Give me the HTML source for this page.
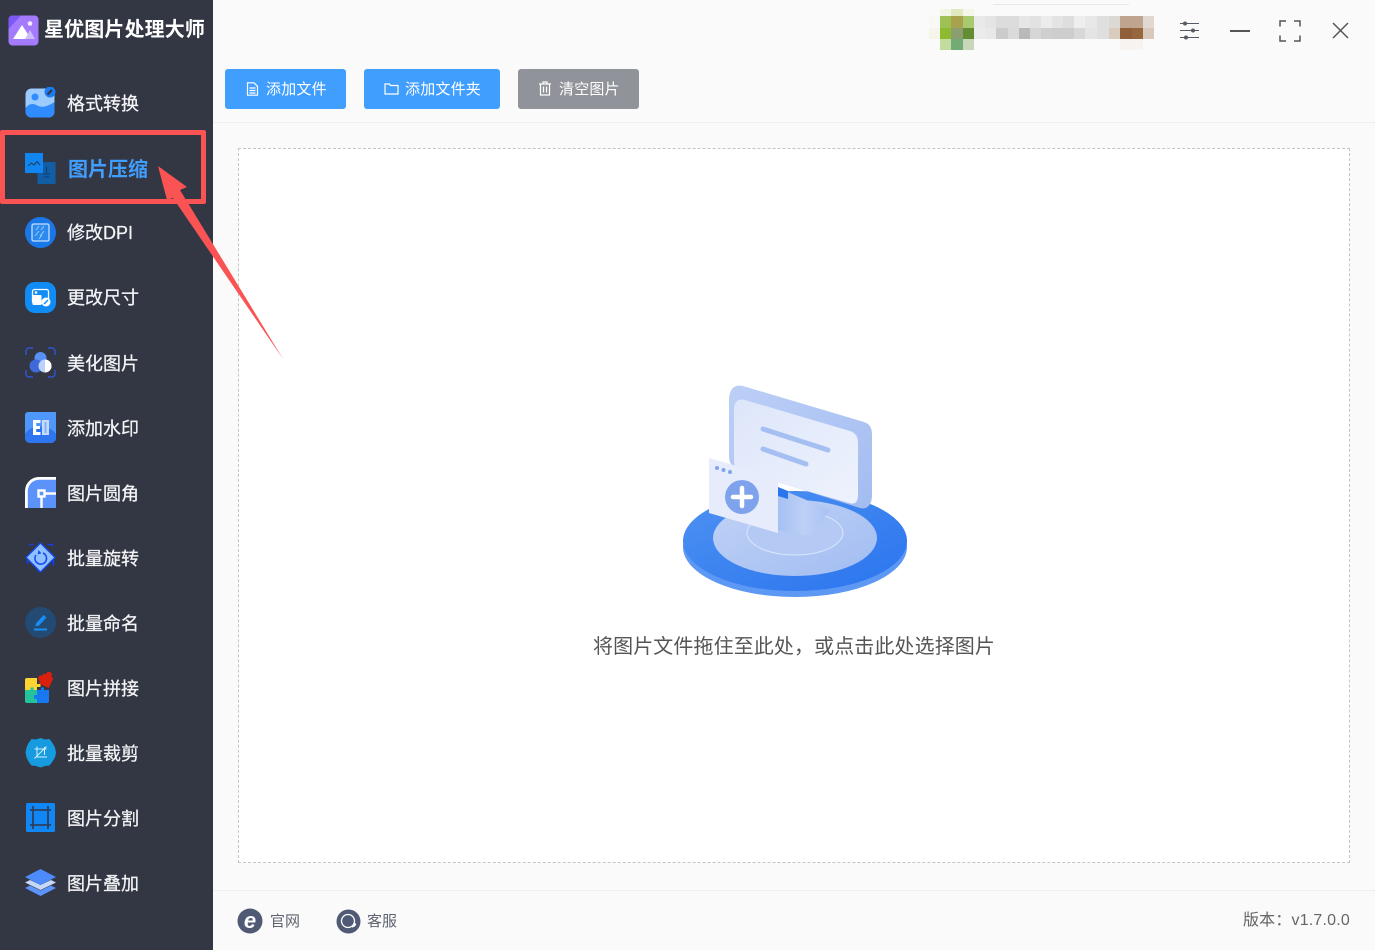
<!DOCTYPE html>
<html lang="zh-CN"><head><meta charset="utf-8"><title>星优图片处理大师</title>
<style>
*{box-sizing:border-box;margin:0;padding:0}
html,body{width:1375px;height:950px;overflow:hidden;background:#fafafa;font-family:"Liberation Sans","Noto Sans CJK SC",sans-serif}
.abs{position:absolute}
#side{position:absolute;left:0;top:0;width:213px;height:950px;background:#333643}
.title{position:absolute;left:44px;top:16px;font-size:20px;line-height:28px;font-weight:700;color:#fff;white-space:nowrap;letter-spacing:.12px}
.it{position:absolute;left:67px;font-size:18px;line-height:26px;color:#f4f5f7;white-space:nowrap;-webkit-text-stroke:.25px #f4f5f7}
.ic{position:absolute;left:25px;width:31px;height:31px}
.btn{position:absolute;top:69px;height:40px;border-radius:3px;background:#409eff;color:#fff;font-size:15px;line-height:40px;white-space:nowrap;letter-spacing:.2px}
.btn span{position:absolute;top:1px}
.btn svg{position:absolute;top:12px}
.line{position:absolute;left:213px;width:1162px;height:1px;background:#efefef}
#drop{position:absolute;left:238px;top:148px;width:1112px;height:715px;background:#fff;border:1px dashed #c4c4c4}
.m{position:absolute}
</style></head><body>
<div id="side"></div>

<svg class="abs" style="left:8px;top:15px" width="31" height="31" viewBox="0 0 31 31"><rect width="30" height="30" x=".5" y=".5" rx="4" fill="#a47bfd"/><path d="M.5 14V4.500a4 4 0 0 1 4-4H13z" fill="#7d58f2"/><circle cx="22" cy="8.500" r="2.300" fill="#f3ecff"/><path d="M5 24 14 10l9 14z" fill="#fff"/><path d="M17 24l5-9 5 9z" fill="#cdbdfb"/></svg>
<div class="title">星优图片处理大师</div>

<svg class="ic" style="top:87px" viewBox="0 0 31 31"><rect x=".500" y="1.500" width="29" height="29" rx="6" fill="#9bcbff"/><path d="M.500 21c5-6 9-4 13-2s10 0 16-4v9.500a6 6 0 0 1-6 6h-17a6 6 0 0 1-6-6z" fill="#2f8cff"/><circle cx="10" cy="10" r="3.500" fill="#2f8cff"/><circle cx="25" cy="5" r="5.500" fill="#1a7cf2"/><path d="M22.500 7.500 27 3" stroke="#333643" stroke-width="2.200"/></svg>
<div class="it" style="top:91px">格式转换</div>

<svg class="ic" style="top:153px" viewBox="0 0 31 31"><rect x="12.500" y="9" width="18" height="22" fill="#125ea5"/><path d="M21.500 14v6M18 21h7M18.500 24h6" stroke="#0a3d73" stroke-width="1"/><rect width="18" height="20" y="0" fill="#1186f1"/><path d="M3 13l3.500-3 2.500 2 3-3.500 3 3.500" fill="none" stroke="#1c3d63" stroke-width="1"/></svg>
<div class="it" style="top:157px;left:68px;color:#409eff;font-weight:700;font-size:20px;-webkit-text-stroke:0">图片压缩</div>

<svg class="ic" style="top:217px" viewBox="0 0 31 31"><circle cx="15.500" cy="15.500" r="15.500" fill="#1a77e8"/><rect x="7" y="7" width="17" height="17" rx="1.500" fill="#2c89f0" stroke="#c5defa" stroke-width="1.300"/><path d="M11 13l3-4M16 13l3-4M10 19l4-5M15 19l4-5M14 22l3-4" stroke="#9fcbf8" stroke-width="1"/></svg>
<div class="it" style="top:220px">修改DPI</div>

<svg class="ic" style="top:282px" viewBox="0 0 31 31"><rect width="31" height="31" rx="10" fill="#118cf5"/><rect x="7.500" y="7.500" width="16" height="14" rx="2" fill="none" stroke="#fff" stroke-width="1.300"/><circle cx="11" cy="10.500" r="1.300" fill="#fff"/><rect x="7.500" y="13" width="9" height="10" rx="1" fill="#fff"/><circle cx="21" cy="20" r="4.500" fill="#fff"/><path d="M19 22l4-4" stroke="#118cf5" stroke-width="1.500"/></svg>
<div class="it" style="top:285px">更改尺寸</div>

<svg class="ic" style="top:347px" viewBox="0 0 31 31"><path d="M1 8V4a3 3 0 0 1 3-3h4M23 1h4a3 3 0 0 1 3 3v4M30 23v4a3 3 0 0 1-3 3h-4M8 30H4a3 3 0 0 1-3-3v-4" fill="none" stroke="#2c55cf" stroke-width="1.500"/><circle cx="15.500" cy="11" r="6" fill="#5990f5"/><circle cx="11" cy="19" r="6.500" fill="#3f68d9"/><circle cx="20" cy="19" r="6.500" fill="#bcd2fb"/><path d="M20 12.500a6.500 6.500 0 0 1 0 13z" fill="#fff"/></svg>
<div class="it" style="top:351px">美化图片</div>

<svg class="ic" style="top:412px" viewBox="0 0 31 31"><path d="M3 0h28v26a5 5 0 0 1-5 5H5a5 5 0 0 1-5-5V3a3 3 0 0 1 3-3z" fill="#4f97fb"/><path d="M0 22c6-10 24-10 31 0v4a5 5 0 0 1-5 5H5a5 5 0 0 1-5-5z" fill="#2e76f0"/><path d="M8 8h7.500v3h-4.300v3H15v3h-3.800v3h4.300v3H8z" fill="#fff"/><path d="M17 8h7v15h-7z" fill="#c7dcfd"/><path d="M19.500 10v11h2V10z" fill="#7fb0f8"/></svg>
<div class="it" style="top:416px">添加水印</div>

<svg class="ic" style="top:477px" viewBox="0 0 31 31"><path d="M1 31V14A13 13 0 0 1 14 1h17v30z" fill="#5b93fb"/><path d="M1.400 31V14A12.600 12.600 0 0 1 14 1.400h17" fill="none" stroke="#fff" stroke-width="2.800"/><rect x="13.500" y="13.500" width="6" height="6" fill="none" stroke="#fff" stroke-width="2.400"/><path d="M20 16.500h11M16.500 20v11" stroke="#fff" stroke-width="2.400"/></svg>
<div class="it" style="top:481px">图片圆角</div>

<svg class="ic" style="top:542px" viewBox="0 0 31 31"><rect x="2.500" y="2.500" width="26" height="26" rx="3" fill="none" stroke="#1340ea" stroke-width="1.500" stroke-dasharray="6 14" stroke-dashoffset="3"/><path d="M15.500 1 30 15.500 15.500 30 1 15.500z" fill="#8fc0ff" stroke="#1449ed" stroke-width="1.300" stroke-linejoin="round"/><path d="M11 13a5.800 5.800 0 1 0 7-2" fill="none" stroke="#1449ed" stroke-width="1.500"/><path d="M13.500 8l2.800 3.200-3.700 1.300z" fill="#1449ed"/></svg>
<div class="it" style="top:546px">批量旋转</div>

<svg class="ic" style="top:607px" viewBox="0 0 31 31"><circle cx="15.500" cy="15.500" r="15.500" fill="#224a73"/><path d="M11 16.500 18.500 8l3 2.500-7.500 8-3.500 1z" fill="#1a8df5"/><rect x="9" y="21.500" width="13" height="2" fill="#1a8df5"/></svg>
<div class="it" style="top:611px">批量命名</div>

<svg class="ic" style="top:672px" viewBox="0 0 31 31"><path d="M0 8a2 2 0 0 1 2-2h10v6h3.500v3H12v3H0z" fill="#fcd535"/><path d="M0 18h5.500v-2.500h3V18H12v13H2a2 2 0 0 1-2-2z" fill="#24c39b"/><path d="M12 18h4v-2.500h3V18h5v11a2 2 0 0 1-2 2H12v-4h-3v-4h3z" fill="#1679f2"/><g transform="rotate(25 22 8)" fill="#d8200c"><rect x="16" y="3.500" width="11" height="11"/><circle cx="21.500" cy="2.500" r="3"/><circle cx="16" cy="9" r="3"/></g></svg>
<div class="it" style="top:676px">图片拼接</div>

<svg class="ic" style="top:737px" viewBox="0 0 31 31"><path d="M15.500 1l4.500 1.500 4.500-.5 3 4 2.500 4.500 1 5-1 5-2.500 4-3 4-4.500.5-4.500 1.500-4.500-1.500-4.500-.5-3-4-2-4-1-5 1-5 2-4.500 3-4 4.500.5z" fill="#169be0"/><path d="M9.500 12h12M12 9.500V20h10M19.500 10v8M9.500 21.500l12-12" stroke="#d4effb" stroke-width="1" fill="none"/></svg>
<div class="it" style="top:741px">批量裁剪</div>

<svg class="ic" style="top:802px" viewBox="0 0 31 31"><rect x="1" y="1" width="29" height="29" rx="1.500" fill="#1186f5"/><path d="M5 8h21M5 23h21M8 4v23M23 4v23" stroke="#2c3f5f" stroke-width="1.800"/></svg>
<div class="it" style="top:806px">图片分割</div>

<svg class="ic" style="top:867px" viewBox="0 0 31 31"><path d="M0 21l5-2.500 10.500 5 10.500-5 5 2.500-15.500 8z" fill="#5c94fb"/><path d="M0 15.500 5 13l10.500 5L26 13l5 2.500L15.500 23z" fill="#c7d9fb"/><path d="M15.500 2 31 10 15.500 18 0 10z" fill="#4d8bfb"/></svg>
<div class="it" style="top:871px">图片叠加</div>

<div class="line" style="top:122px"></div>
<div class="line" style="top:890px"></div>

<div class="btn" style="left:225px;width:121px"><svg style="left:21px;top:13px" width="13" height="14" viewBox="0 0 13 14" fill="none" stroke="#fff" stroke-width="1.200"><path d="M1.500.800h6.500l3.500 3.500v8.900h-10zM3.500 6h6M3.500 8.500h6M3.500 11h6"/></svg><span style="left:41px">添加文件</span></div>
<div class="btn" style="left:364px;width:136px"><svg style="left:20px;top:14px" width="15" height="12" viewBox="0 0 15 12" fill="none" stroke="#fff" stroke-width="1.200"><path d="M1 1h4.500l1 1.500H14v8.500H1z"/></svg><span style="left:41px">添加文件夹</span></div>
<div class="btn" style="left:518px;width:121px;background:#909399"><svg style="left:20px;top:12px" width="14" height="15" viewBox="0 0 14 15" fill="none" stroke="#fff" stroke-width="1.200"><path d="M1 3h12M5 3V1h4v2M2.500 3v11h9V3M5.500 5.500v6M8.500 5.500v6"/></svg><span style="left:41px">清空图片</span></div>

<div id="drop"></div>

<svg class="abs" style="left:660px;top:370px" width="270" height="240" viewBox="0 0 270 240">
<defs>
<linearGradient id="b1" x1="0" y1="0" x2="1" y2="1"><stop offset="0" stop-color="#4e92f2"/><stop offset="1" stop-color="#2a74ee"/></linearGradient>
<linearGradient id="b2" x1="0" y1="0" x2="1" y2="1"><stop offset="0" stop-color="#c0d2f6"/><stop offset="1" stop-color="#a2bdf2"/></linearGradient>
<linearGradient id="sc" x1="0" y1="0" x2="1" y2="1"><stop offset="0" stop-color="#dde6fa"/><stop offset="1" stop-color="#eef2fc"/></linearGradient>
<linearGradient id="nk" x1="0" y1="0" x2="1" y2="0"><stop offset="0" stop-color="#a6c0f3"/><stop offset=".5" stop-color="#bdd0f6"/><stop offset="1" stop-color="#a8c2f4"/></linearGradient>
<linearGradient id="fr" x1="0" y1="0" x2="1" y2="1"><stop offset="0" stop-color="#bccff6"/><stop offset="1" stop-color="#a3bcf1"/></linearGradient>
</defs>
<ellipse cx="135" cy="177" rx="112" ry="50" fill="#5c98f4"/>
<ellipse cx="135" cy="171" rx="112" ry="50" fill="url(#b1)"/>
<ellipse cx="135" cy="168" rx="82" ry="38" fill="url(#b2)"/>
<ellipse cx="135" cy="163" rx="48" ry="22" fill="#b4caf5" stroke="#dbe6fb" stroke-width="1"/>
<path d="M118 118 170 140 150 166 118 160z" fill="url(#nk)"/>
<path d="M69 31c0-12 5-17 14-15l121 36c6 2 8 6 8 13v60c0 10-5 15-12 13L80 100c-7-2-11-6-11-14z" fill="url(#fr)"/>
<path d="M74 39c0-7 4-11 11-9l105 31c6 2 8 6 8 12v52c0 7-3 10-9 8L84 103c-7-2-10-6-10-12z" fill="url(#sc)"/>
<path d="M103 59l65 21" stroke="#a5bff2" stroke-width="5" stroke-linecap="round"/>
<path d="M103 79l43 15" stroke="#a5bff2" stroke-width="5" stroke-linecap="round"/>
<path d="M118 117l10 4v8l-10-3z" fill="#2a74ee"/>
<path d="M49 88l69 20v55l-69-20z" fill="#e6ecfb"/>
<circle cx="57" cy="98" r="2" fill="#7fa4ee"/><circle cx="63.500" cy="100" r="2" fill="#7fa4ee"/><circle cx="70" cy="102" r="2" fill="#7fa4ee"/>
<circle cx="82" cy="127" r="17" fill="#7ea3ec"/>
<path d="M82 118v18M73 127h18" stroke="#fff" stroke-width="4.500" stroke-linecap="round"/>
</svg>

<div class="abs" style="left:593px;top:634px;font-size:20px;line-height:26px;color:#555;white-space:nowrap;letter-spacing:.1px">将图片文件拖住至此处，或点击此处选择图片</div>

<svg class="abs" style="left:237px;top:908px" width="26" height="26" viewBox="0 0 26 26"><circle cx="13" cy="13" r="12.500" fill="#505a74"/><text x="13" y="20" text-anchor="middle" font-family="Liberation Sans" font-size="22" font-weight="700" font-style="italic" fill="#fff">e</text></svg>
<div class="abs" style="left:270px;top:911px;font-size:15px;line-height:21px;color:#5f6470">官网</div>
<svg class="abs" style="left:336px;top:909px" width="25" height="25" viewBox="0 0 25 25"><circle cx="12.500" cy="12.500" r="12" fill="#505a74"/><circle cx="12" cy="12" r="6.500" fill="none" stroke="#fff" stroke-width="1.300"/><path d="M16 18l3-1.500" stroke="#fff" stroke-width="1.500"/><circle cx="19" cy="15.500" r="1.200" fill="#fff"/></svg>
<div class="abs" style="left:367px;top:911px;font-size:15px;line-height:21px;color:#5f6470">客服</div>
<div class="abs" style="left:1243px;top:910px;font-size:16px;line-height:21px;color:#666;white-space:nowrap;letter-spacing:.18px">版本：v1.7.0.0</div>

<!-- mosaic -->
<div class="abs" style="left:993px;top:4px;width:136px;height:1px;background:#e8e8e8"></div>
<div id="mos">
<div class="m" style="left:929px;top:16px;width:11px;height:12px;background:#f8f9f4"></div>
<div class="m" style="left:929px;top:28px;width:11px;height:11px;background:#f4f6ec"></div>
<div class="m" style="left:940px;top:9px;width:11px;height:7px;background:#f1f5e4"></div>
<div class="m" style="left:951px;top:9px;width:12px;height:7px;background:#dfe9c0"></div>
<div class="m" style="left:963px;top:9px;width:11px;height:7px;background:#f3f6e9"></div>
<div class="m" style="left:940px;top:16px;width:11px;height:12px;background:#9dc154"></div>
<div class="m" style="left:951px;top:16px;width:12px;height:12px;background:#a7a24b"></div>
<div class="m" style="left:963px;top:16px;width:11px;height:12px;background:#a9c96f"></div>
<div class="m" style="left:940px;top:28px;width:11px;height:11px;background:#8dba2f"></div>
<div class="m" style="left:951px;top:28px;width:12px;height:11px;background:#8c9d6f"></div>
<div class="m" style="left:963px;top:28px;width:11px;height:11px;background:#648c33"></div>
<div class="m" style="left:940px;top:39px;width:11px;height:11px;background:#c1dc9d"></div>
<div class="m" style="left:951px;top:39px;width:12px;height:11px;background:#72ab74"></div>
<div class="m" style="left:963px;top:39px;width:11px;height:11px;background:#c8d7b9"></div>
<div class="m" style="left:974px;top:16px;width:11px;height:12px;background:#e9e9e9"></div>
<div class="m" style="left:985px;top:16px;width:11px;height:12px;background:#e4e4e4"></div>
<div class="m" style="left:996px;top:16px;width:23px;height:12px;background:#dcdcdc"></div>
<div class="m" style="left:1019px;top:16px;width:11px;height:12px;background:#e6e6e6"></div>
<div class="m" style="left:1030px;top:16px;width:11px;height:12px;background:#e2e2e2"></div>
<div class="m" style="left:1041px;top:16px;width:11px;height:12px;background:#ececec"></div>
<div class="m" style="left:1052px;top:16px;width:11px;height:12px;background:#e4e4e4"></div>
<div class="m" style="left:1063px;top:16px;width:11px;height:12px;background:#dedede"></div>
<div class="m" style="left:1074px;top:16px;width:11px;height:12px;background:#eeeeee"></div>
<div class="m" style="left:1085px;top:16px;width:12px;height:12px;background:#e8e8e8"></div>
<div class="m" style="left:1097px;top:16px;width:12px;height:12px;background:#dfdfdf"></div>
<div class="m" style="left:1109px;top:16px;width:11px;height:12px;background:#dcd8d4"></div>
<div class="m" style="left:1120px;top:16px;width:23px;height:12px;background:#bfa590"></div>
<div class="m" style="left:1143px;top:16px;width:11px;height:12px;background:#e1d8d1"></div>
<div class="m" style="left:974px;top:28px;width:11px;height:11px;background:#ebebeb"></div>
<div class="m" style="left:985px;top:28px;width:11px;height:11px;background:#e8e8e8"></div>
<div class="m" style="left:996px;top:28px;width:12px;height:11px;background:#cbcbcb"></div>
<div class="m" style="left:1008px;top:28px;width:11px;height:11px;background:#dadada"></div>
<div class="m" style="left:1019px;top:28px;width:11px;height:11px;background:#b9b9b9"></div>
<div class="m" style="left:1030px;top:28px;width:11px;height:11px;background:#d6d6d6"></div>
<div class="m" style="left:1041px;top:28px;width:11px;height:11px;background:#cfcfcf"></div>
<div class="m" style="left:1052px;top:28px;width:22px;height:11px;background:#cdcdcd"></div>
<div class="m" style="left:1074px;top:28px;width:11px;height:11px;background:#d8d8d8"></div>
<div class="m" style="left:1085px;top:28px;width:12px;height:11px;background:#e4e4e4"></div>
<div class="m" style="left:1097px;top:28px;width:12px;height:11px;background:#dfdfdf"></div>
<div class="m" style="left:1109px;top:28px;width:11px;height:11px;background:#d9cbbe"></div>
<div class="m" style="left:1120px;top:28px;width:12px;height:11px;background:#905f39"></div>
<div class="m" style="left:1132px;top:28px;width:11px;height:11px;background:#96673f"></div>
<div class="m" style="left:1143px;top:28px;width:11px;height:11px;background:#d8c9bc"></div>
<div class="m" style="left:1120px;top:39px;width:23px;height:11px;background:#f6f3f0"></div>
</div>

<svg class="abs" style="left:1178px;top:19px" width="24" height="24" viewBox="0 0 24 24" fill="none" stroke="#555a64" stroke-width="1.300"><path d="M2 4.500h19M2 11.500h19M2 18.500h19" stroke-width="1"/><circle cx="7" cy="4.500" r="2" fill="#555a64" stroke="none"/><circle cx="15" cy="11.500" r="2" fill="#555a64" stroke="none"/><circle cx="8" cy="18.500" r="2" fill="#555a64" stroke="none"/></svg>
<div class="abs" style="left:1230px;top:30px;width:20px;height:1.500px;background:#555"></div>
<svg class="abs" style="left:1279px;top:20px" width="22" height="22" viewBox="0 0 22 22" fill="none" stroke="#555" stroke-width="1.500"><path d="M1 6.500V1h6M15 1h6v5.500M21 15.500V21h-6M7 21H1v-5.500"/></svg>
<svg class="abs" style="left:1332px;top:22px" width="17" height="17" viewBox="0 0 17 17" fill="none" stroke="#555" stroke-width="1.500"><path d="M1 1l15 15M16 1 1 16"/></svg>

<!-- red annotation -->
<div class="abs" style="left:0;top:130px;width:206px;height:74px;border:5px solid #f95353;border-radius:2px"></div>
<svg class="abs" style="left:150px;top:160px" width="140" height="205" viewBox="0 0 140 205"><path d="M8 6 37 27 30 30 133 199 23 38 17 40z" fill="#f95353"/></svg>
</body></html>
